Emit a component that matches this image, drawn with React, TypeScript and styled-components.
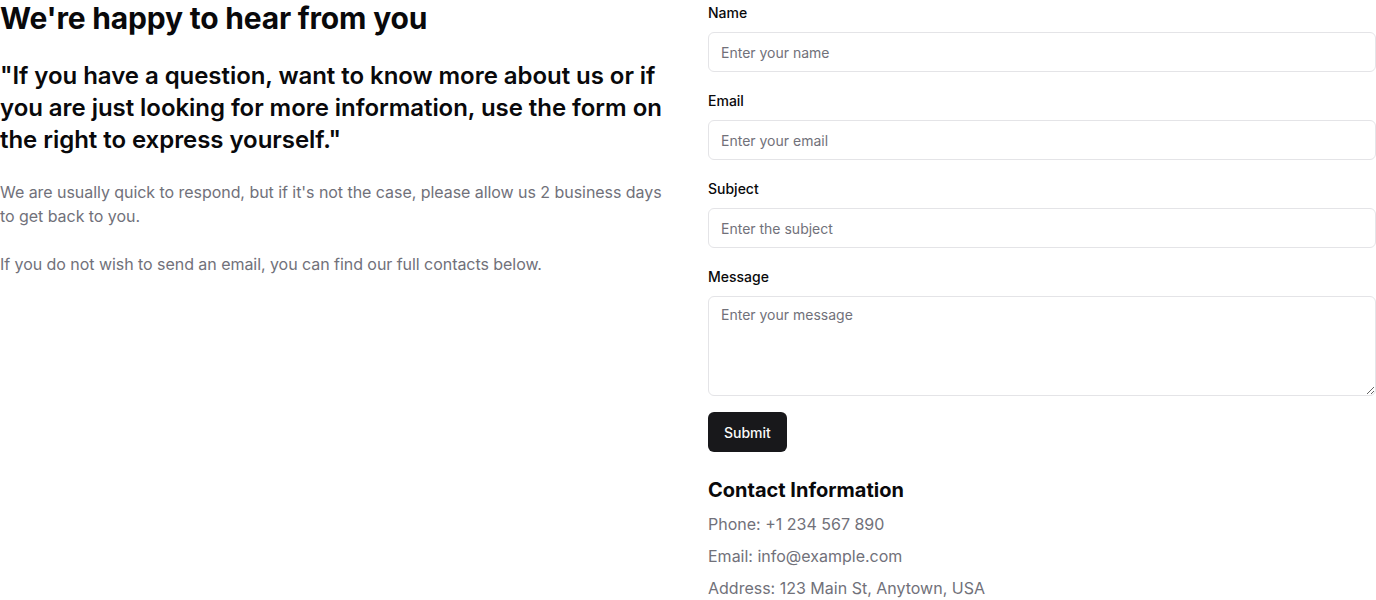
import React from "react";
import styled, { createGlobalStyle } from "styled-components";

const GlobalStyle = createGlobalStyle`
  * { box-sizing: border-box; }
  html, body { margin: 0; padding: 0; background: #ffffff; }
  body {
    font-family: Inter, "Noto Sans", sans-serif;
    color: #09090b;
    -webkit-font-smoothing: antialiased;
  }
`;

const Page = styled.div`
  display: grid;
  grid-template-columns: 1fr 1fr;
  column-gap: 40px;
  width: 1376px;
`;

const Intro = styled.section`
  display: flex;
  flex-direction: column;
`;

const Title = styled.h1`
  margin: 0;
  font-size: 30px;
  line-height: 36px;
  font-weight: 700;
  letter-spacing: -0.2px;
`;

const Quote = styled.h2`
  margin: 24px 0 0;
  font-size: 24px;
  line-height: 32px;
  font-weight: 600;
  letter-spacing: -0.05px;
`;

const Muted = styled.p`
  margin: 24px 0 0;
  font-size: 16px;
  line-height: 24px;
  color: #71717a;
  letter-spacing: -0.05px;
`;

const Side = styled.section`
  display: flex;
  flex-direction: column;
`;

const Form = styled.form`
  display: flex;
  flex-direction: column;
  gap: 19px;
  padding-top: 3px;
`;

const Field = styled.div`
  display: flex;
  flex-direction: column;
  gap: 9px;
`;

const Label = styled.label`
  font-size: 14px;
  line-height: 20px;
  font-weight: 500;
  color: #09090b;
`;

const fieldBase = `
  width: 100%;
  border: 1px solid #e4e4e7;
  border-radius: 6px;
  background: #ffffff;
  font-family: Inter, "Noto Sans", sans-serif;
  font-size: 14px;
  line-height: 20px;
  color: #09090b;
  padding: 0 12px;
  outline: none;
  &::placeholder { color: #71717a; opacity: 1; }
`;

const Input = styled.input`
  ${fieldBase}
  height: 40px;
`;

const TextArea = styled.textarea`
  ${fieldBase}
  height: 100px;
  padding: 8px 12px;
  display: block;
  resize: vertical;
`;

const SubmitRow = styled.div`
  display: flex;
  margin-top: -3px;
`;

const Button = styled.button`
  height: 40px;
  padding: 0 16px;
  border: none;
  border-radius: 6px;
  background: #18181b;
  color: #fafafa;
  font-family: Inter, "Noto Sans", sans-serif;
  font-size: 14px;
  font-weight: 500;
  cursor: pointer;
`;

const Contact = styled.div`
  margin-top: 24px;
  display: flex;
  flex-direction: column;
  gap: 8px;
`;

const ContactTitle = styled.h3`
  margin: 0;
  font-size: 20px;
  line-height: 28px;
  font-weight: 700;
`;

const ContactLine = styled.p`
  margin: 0;
  font-size: 16px;
  line-height: 24px;
  color: #71717a;
`;

const fields = [
  { id: "name", label: "Name", placeholder: "Enter your name", type: "text" },
  { id: "email", label: "Email", placeholder: "Enter your email", type: "email" },
  { id: "subject", label: "Subject", placeholder: "Enter the subject", type: "text" },
];

export default function App() {
  return (
    <>
      <GlobalStyle />
      <Page>
        <Intro>
          <Title>We're happy to hear from you</Title>
          <Quote>
            "If you have a question, want to know more about us or if you are just looking for more
            information, use the form on the right to express yourself."
          </Quote>
          <Muted>
            We are usually quick to respond, but if it's not the case, please allow us 2 business
            days to get back to you.
          </Muted>
          <Muted>If you do not wish to send an email, you can find our full contacts below.</Muted>
        </Intro>
        <Side>
          <Form onSubmit={(e) => e.preventDefault()}>
            {fields.map((f) => (
              <Field key={f.id}>
                <Label htmlFor={f.id}>{f.label}</Label>
                <Input id={f.id} type={f.type} placeholder={f.placeholder} />
              </Field>
            ))}
            <Field>
              <Label htmlFor="message">Message</Label>
              <TextArea id="message" placeholder="Enter your message" />
            </Field>
            <SubmitRow>
              <Button type="submit">Submit</Button>
            </SubmitRow>
          </Form>
          <Contact>
            <ContactTitle>Contact Information</ContactTitle>
            <ContactLine>Phone: +1 234 567 890</ContactLine>
            <ContactLine>Email: info@example.com</ContactLine>
            <ContactLine>Address: 123 Main St, Anytown, USA</ContactLine>
          </Contact>
        </Side>
      </Page>
    </>
  );
}
